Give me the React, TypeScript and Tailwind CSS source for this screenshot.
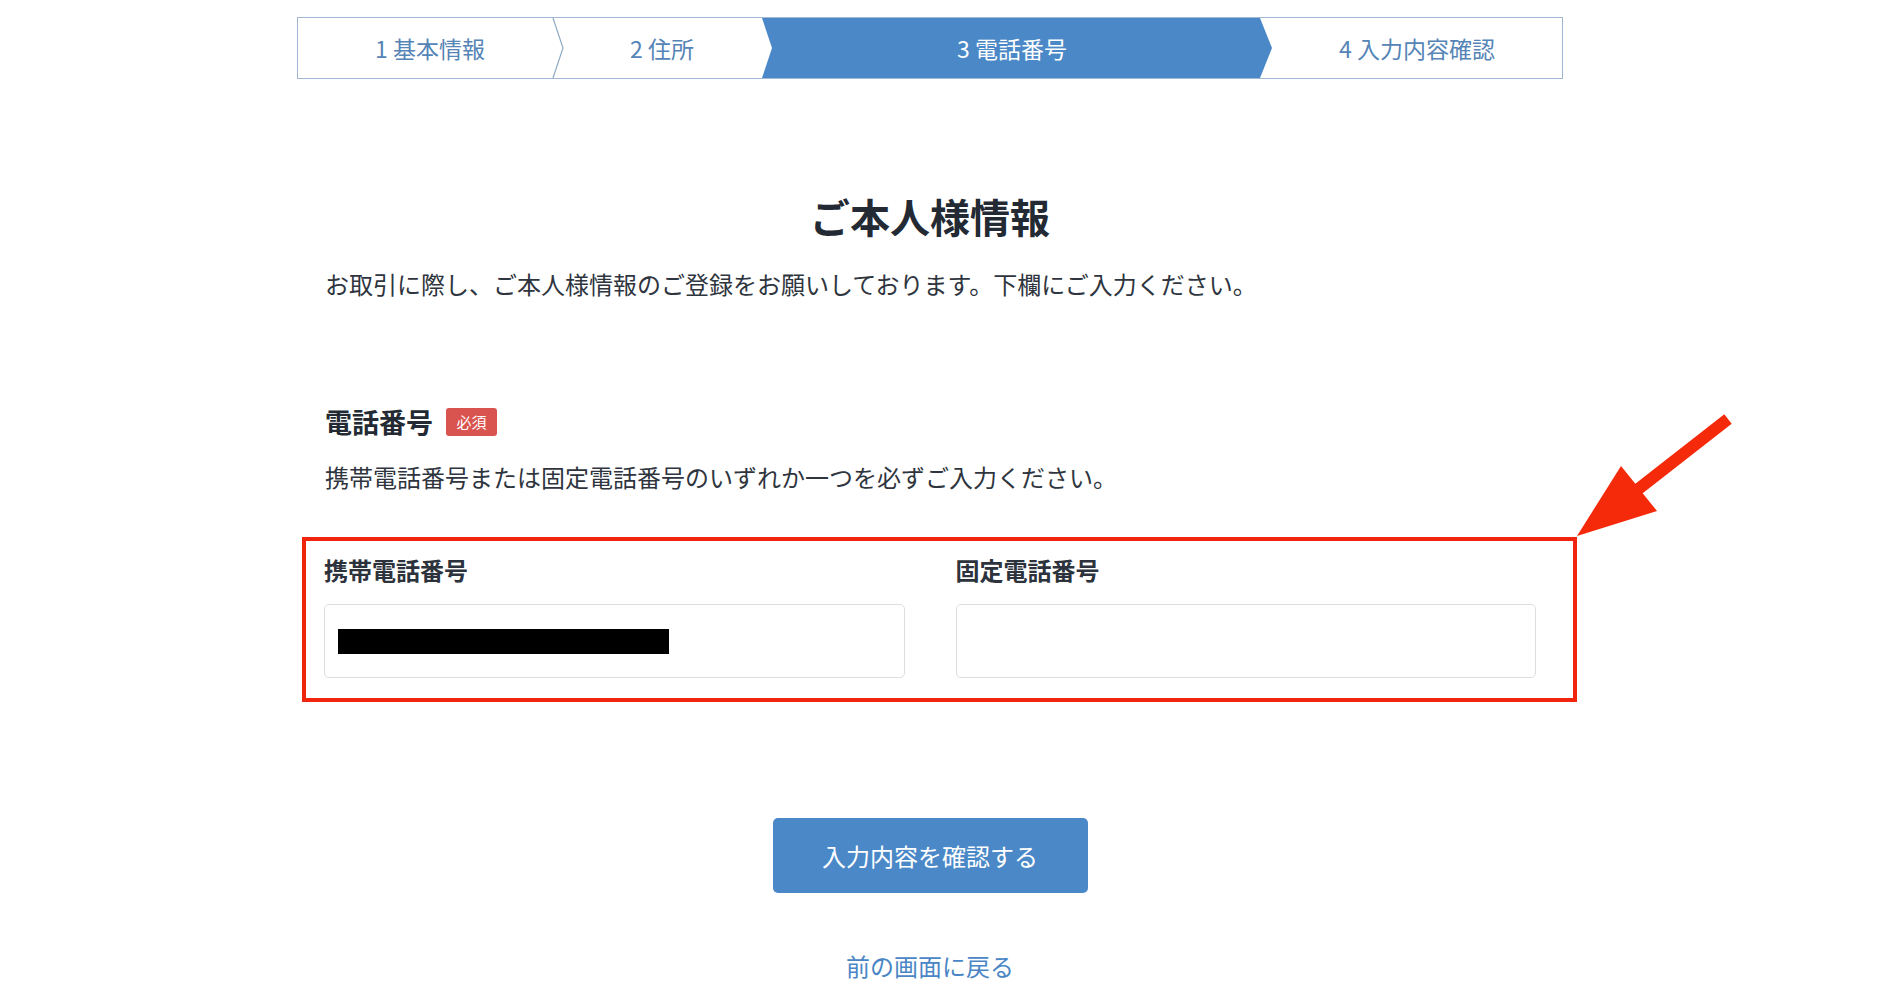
import React from 'react';

const steps = [
  { label: '1 基本情報', width: 'w-[264px]', active: false },
  { label: '2 住所', width: 'w-[200px]', active: false },
  { label: '3 電話番号', width: 'w-[500px]', active: true },
  { label: '4 入力内容確認', width: 'flex-1 pl-[10px]', active: false },
];

function Stepper() {
  return (
    <div className="relative mt-[17px] h-[62px] border border-[#9fb9d5]">
      {/* chevrons + active fill */}
      <svg className="absolute inset-0" width="1264" height="60" viewBox="0 0 1264 60">
        <polyline points="255,0 265,30 255,60" fill="none" stroke="#8fa9c4" strokeWidth="1.2" />
        <polygon points="464,0 962,0 974,30 962,60 464,60 474,30" fill="#4a88c7" />
      </svg>
      <div className="relative flex h-full">
        {steps.map((s) => (
          <div
            key={s.label}
            className={`${s.width} flex items-center justify-center text-[23px] ${
              s.active ? 'text-white' : 'text-[#5584b6]'
            }`}
          >
            {s.label}
          </div>
        ))}
      </div>
    </div>
  );
}

function Field({ label, children }: { label: string; children?: React.ReactNode }) {
  return (
    <div>
      <div className="text-[24px] leading-[36px] font-bold text-[#2d333c]">{label}</div>
      <div className="mt-[16px] flex h-[74px] items-center rounded-[5px] border border-[#dcdee2] bg-white px-[13px]">
        {children}
      </div>
    </div>
  );
}

export default function App() {
  return (
    <div className="relative h-[997px] w-[1900px] overflow-hidden bg-white font-['Noto_Sans_CJK_JP','Noto_Sans',sans-serif] text-[#2f353e]">
      <div className="ml-[297px] w-[1266px]">
        <Stepper />

        <h1 className="mt-[107px] text-center text-[40px] leading-[60px] font-bold text-[#232a33]">
          ご本人様情報
        </h1>
        <p className="mt-[20px] px-[28px] text-[24px] leading-[36px]">
          お取引に際し、ご本人様情報のご登録をお願いしております。下欄にご入力ください。
        </p>

        <div className="mt-[100px] flex items-center gap-[13px] px-[28px]">
          <span className="text-[27px] leading-[40px] font-bold text-[#232a33]">電話番号</span>
          <span className="flex h-[28px] w-[51px] items-center justify-center rounded-[3px] bg-[#d9534f] text-[15px] text-white">
            必須
          </span>
        </div>
        <p className="mt-[17px] px-[28px] text-[24px] leading-[36px]">
          携帯電話番号または固定電話番号のいずれか一つを必ずご入力ください。
        </p>

        <div className="relative mx-[27px] mt-[57px]">
          {/* annotation frame */}
          <div className="pointer-events-none absolute left-[-22px] right-[-41px] top-[-15px] bottom-[-24px] border-[4px] border-[#f1250e]" />
          <div className="grid grid-cols-2 gap-[51px]">
            <Field label="携帯電話番号">
              <div className="h-[25px] w-[331px] bg-black" />
            </Field>
            <Field label="固定電話番号" />
          </div>
        </div>

        <div className="mt-[140px] flex justify-center">
          <button className="h-[75px] w-[315px] rounded-[5px] bg-[#4a88c7] text-[24px] text-white">
            入力内容を確認する
          </button>
        </div>
        <div className="mt-[55px] text-center text-[24px] leading-[36px] text-[#4a86c5]">
          前の画面に戻る
        </div>
      </div>

      {/* annotation arrow */}
      <svg className="pointer-events-none absolute inset-0" width="1900" height="997" viewBox="0 0 1900 997">
        <polygon
          points="1577,536 1621,466 1635.3,483.8 1724.3,414.3 1731.7,423.7 1642.7,493.2 1657,511"
          fill="#f52a0a"
        />
      </svg>
    </div>
  );
}
